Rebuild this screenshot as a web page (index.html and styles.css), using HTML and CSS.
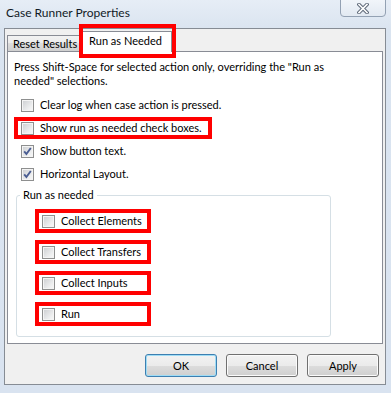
FILE: index.html
```html
<!DOCTYPE html>
<html lang="en">
<head>
    <meta charset="UTF-8">
    <meta name="viewport" content="width=device-width, initial-scale=1.0">
    <title>Case Runner Properties</title>
    <link rel="stylesheet" href="styles.css">
</head>
<body>
    <div class="window">
        <div class="titlebar">
            <span class="title">Case Runner Properties</span>
            <button class="close" type="button" aria-label="Close">
                <svg width="12" height="11" viewBox="0 0 12 11">
                    <path d="M2 1.5 L10 9.5 M10 1.5 L2 9.5" stroke="#5d6878" stroke-width="3.6" stroke-linecap="square" fill="none"/>
                    <path d="M2 1.5 L10 9.5 M10 1.5 L2 9.5" stroke="#ffffff" stroke-width="1.6" stroke-linecap="square" fill="none"/>
                </svg>
            </button>
        </div>

        <div class="client">
            <div class="tabs">
                <div class="tab">Reset Results</div>
                <div class="tab active">Run as Needed</div>
            </div>

            <div class="panel">
                <p class="hint">Press Shift-Space for selected action only, overriding the "Run as needed" selections.</p>

                <label class="check">
                    <span class="box"></span>
                    <span>Clear log when case action is pressed.</span>
                </label>
                <label class="check mark">
                    <span class="box"></span>
                    <span>Show run as needed check boxes.</span>
                </label>
                <label class="check">
                    <span class="box checked">
                        <svg width="11" height="11" viewBox="0 0 11 11"><path d="M2.2 5.4 L4.4 8 L8.8 2" stroke="#4a5d92" stroke-width="1.9" fill="none"/></svg>
                    </span>
                    <span>Show button text.</span>
                </label>
                <label class="check">
                    <span class="box checked">
                        <svg width="11" height="11" viewBox="0 0 11 11"><path d="M2.2 5.4 L4.4 8 L8.8 2" stroke="#4a5d92" stroke-width="1.9" fill="none"/></svg>
                    </span>
                    <span>Horizontal Layout.</span>
                </label>

                <div class="group">
                    <span class="group-title">Run as needed</span>
                    <label class="check item mark">
                        <span class="box"></span>
                        <span>Collect Elements</span>
                    </label>
                    <label class="check item mark">
                        <span class="box"></span>
                        <span>Collect Transfers</span>
                    </label>
                    <label class="check item mark">
                        <span class="box"></span>
                        <span>Collect Inputs</span>
                    </label>
                    <label class="check item mark">
                        <span class="box"></span>
                        <span>Run</span>
                    </label>
                </div>
            </div>

            <div class="buttons">
                <button class="btn default" type="button">OK</button>
                <button class="btn" type="button">Cancel</button>
                <button class="btn" type="button">Apply</button>
            </div>
        </div>
    </div>
</body>
</html>
```

FILE: styles.css
```css
body {
    margin: 0;
    font-family: Lato, "Noto Sans", sans-serif;
    font-size: 11px;
    color: #000;
    background: linear-gradient(#e6edf6, #dae4f0 30px, #d9e3f0);
}
.window {
    display: flex;
    flex-direction: column;
    width: 391px;
    height: 393px;
    padding: 0 5px 8px 4px;
    box-sizing: border-box;
}
.titlebar {
    flex: none;
    display: flex;
    justify-content: space-between;
    align-items: flex-start;
    height: 28px;
}
.title {
    margin: 6px 0 0 2px;
    font-size: 12px;
    line-height: 14px;
    color: #111a26;
}
.close {
    width: 46px;
    height: 18px;
    margin-top: -1px;
    padding: 0;
    display: flex;
    align-items: center;
    justify-content: center;
    border: 1px solid #93a1b3;
    border-radius: 0 0 4px 4px;
    background: linear-gradient(#f1f5fa, #e2e9f2);
}
.client {
    flex: 1;
    min-height: 0;
    display: flex;
    flex-direction: column;
    padding: 2px 2px 0 2px;
    border: 1px solid #868c94;
    background-color: #f0f0f0;
}
.tabs {
    flex: none;
    display: flex;
    align-items: flex-end;
    height: 20px;
}
.tab {
    width: 73px;
    height: 16px;
    padding-left: 5px;
    box-sizing: border-box;
    line-height: 15px;
    white-space: nowrap;
    border: 1px solid #898c95;
    border-bottom: none;
    background: linear-gradient(#f2f2f2, #ebebeb 50%, #dddddd 50%, #cfcfcf);
}
.tab.active {
    position: relative;
    z-index: 1;
    width: 93px;
    height: 21px;
    margin: 0 0 -1px -1px;
    padding: 0;
    text-align: center;
    line-height: 18px;
    background: #fff;
}
/* red annotation box drawn over the selected tab */
.tab.active::after {
    content: "";
    position: absolute;
    top: -8px;
    left: -1px;
    right: -5px;
    bottom: -6px;
    border: 4px solid #ff0000;
}
.panel {
    flex: 1;
    min-height: 0;
    display: flex;
    flex-direction: column;
    align-items: flex-start;
    padding: 7px 6px 6px 6px;
    border: 1px solid #898c95;
    background-color: #fff;
}
.hint {
    width: 330px;
    margin: 1px 0 10px 0;
    line-height: 14px;
}
.check {
    flex: none;
    display: flex;
    align-items: center;
    gap: 6px;
    height: 14px;
    margin: 0 0 9px 4px;
    padding: 0 6px 0 3px;
    line-height: 14px;
    white-space: nowrap;
}
.mark {
    outline: 4px solid #ff0000;
}
.box {
    flex: none;
    width: 13px;
    height: 13px;
    box-sizing: border-box;
    display: flex;
    align-items: center;
    justify-content: center;
    border: 1px solid #8e8f8f;
    box-shadow: inset 0 0 0 1px #f4f4f4;
    background: linear-gradient(135deg, #cbcdd0, #eeeff0 70%, #f8f8f8);
}
.group {
    flex: 1;
    min-height: 0;
    align-self: stretch;
    display: flex;
    flex-direction: column;
    align-items: flex-start;
    width: 315px;
    max-width: 315px;
    margin: 5px 0 0 2px;
    padding-left: 22px;
    box-sizing: border-box;
    border: 1px solid #d5dfe5;
    border-radius: 3px;
}
.group-title {
    margin: -8px 0 11px -19px;
    padding: 0 3px;
    line-height: 14px;
    background-color: #fff;
}
.check.item {
    width: 108px;
    height: 16px;
    box-sizing: border-box;
    margin: 0 0 15px 0;
}
.check.item:last-child {
    margin-bottom: 0;
}
.buttons {
    flex: none;
    display: flex;
    justify-content: flex-end;
    gap: 9px;
    height: 40px;
    padding: 10px 4px 0 0;
    box-sizing: border-box;
}
.btn {
    width: 72px;
    height: 23px;
    padding: 0;
    font-family: inherit;
    font-size: 11px;
    color: #000;
    border: 1px solid #707070;
    border-radius: 3px;
    box-shadow: inset 0 0 0 1px #fbfbfb;
    background: linear-gradient(#f2f2f2, #ebebeb 50%, #dddddd 50%, #cfcfcf);
}
.btn.default {
    border-color: #3c7fb1;
    box-shadow: inset 0 0 0 1px #9fdcf5;
}
```
